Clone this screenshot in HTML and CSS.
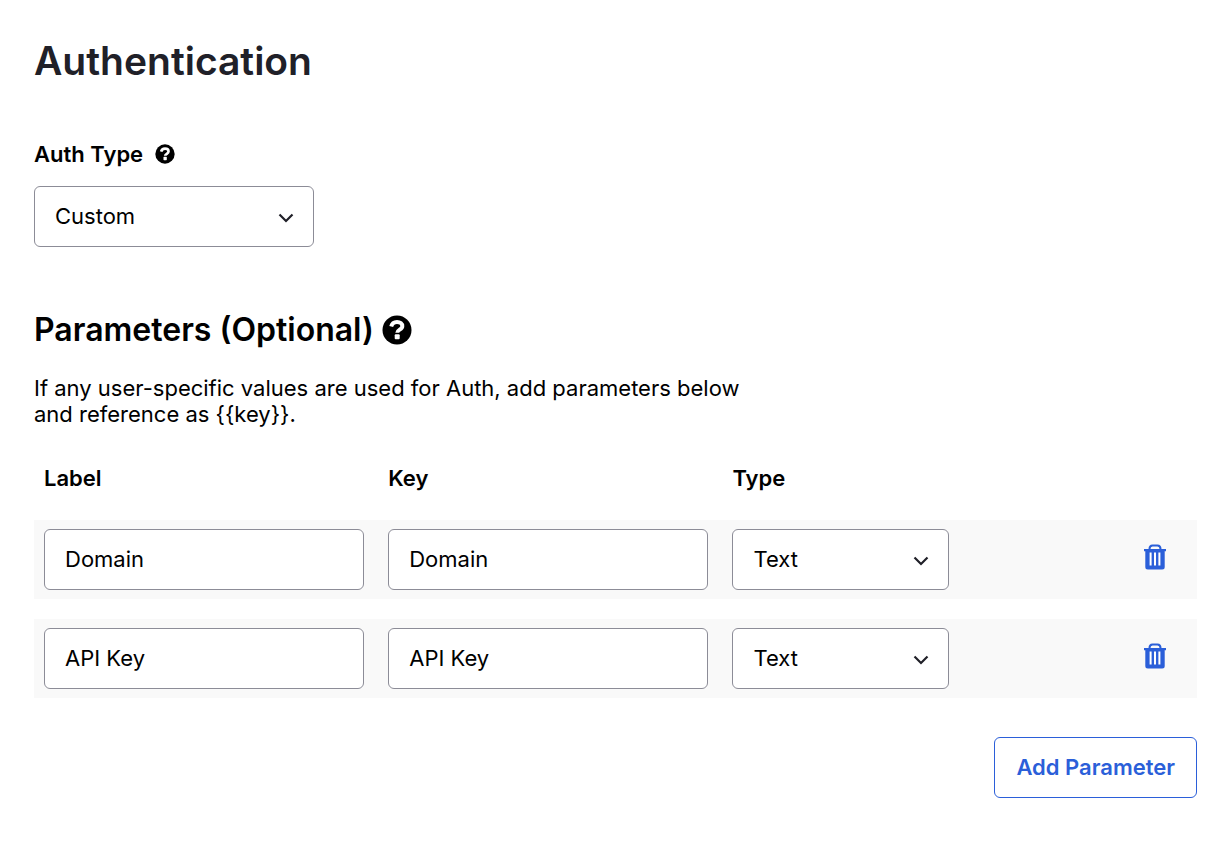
FILE: index.html
```html
<!DOCTYPE html>
<html lang="en">
<head>
<meta charset="utf-8">
<meta name="viewport" content="width=device-width, initial-scale=1">
<title>Authentication</title>
<link rel="stylesheet" href="styles.css">
</head>
<body>
<svg class="sprite" aria-hidden="true">
  <symbol id="help" viewBox="0 0 30 30">
    <circle cx="15" cy="15" r="14.500" fill="currentColor"/>
    <path d="M9.200 11.500C10 8.300 12.200 7 15 7c3.200 0 5.300 1.700 5.300 4.200 0 3.600-5 3.300-5 6.600" fill="none" stroke="#fff" stroke-width="4"/>
    <rect x="12.700" y="19.300" width="5" height="5" rx="1" fill="#fff"/>
  </symbol>
  <symbol id="chevron" viewBox="0 0 16 10">
    <path d="M1.500 1.500 8 8l6.500-6.500" fill="none" stroke="currentColor" stroke-width="2.200"/>
  </symbol>
  <symbol id="trash" viewBox="0 0 24 26">
    <path d="M6.500 6V5q0-3.500 3-3.500h5q3 0 3 3.500v1" fill="none" stroke="currentColor" stroke-width="2"/>
    <path d="M1 5h22v2.200h-1.300V23q0 2.500-2.500 2.500H4.800Q2.300 25.500 2.300 23V7.200H1z" fill="currentColor"/>
    <path d="M7.600 8.500v13M12 8.500v13M16.400 8.500v13" stroke="#fff" stroke-width="2"/>
  </symbol>
</svg>
<main class="page">
  <h1 class="page-title">Authentication</h1>

  <div class="field-head">
    <label class="field-label" for="auth-type">Auth Type</label>
    <svg class="help-small" role="img" aria-label="Help"><use href="#help"/></svg>
  </div>
  <div class="select auth-select">
    <select class="control" id="auth-type"><option>Custom</option></select>
    <svg class="chevron" aria-hidden="true"><use href="#chevron"/></svg>
  </div>

  <h2 class="section-title">Parameters (Optional)
    <svg class="help-large" role="img" aria-label="Help"><use href="#help"/></svg>
  </h2>
  <p class="description">If any user-specific values are used for Auth, add parameters below and reference as {{key}}.</p>

  <table class="params">
    <thead>
      <tr>
        <th class="col-text" scope="col">Label</th>
        <th class="col-text" scope="col">Key</th>
        <th class="col-type" scope="col">Type</th>
        <td class="col-action"></td>
      </tr>
    </thead>
    <tbody>
      <tr>
        <td><input class="control" type="text" value="Domain" aria-label="Label"></td>
        <td><input class="control" type="text" value="Domain" aria-label="Key"></td>
        <td><div class="select"><select class="control" aria-label="Type"><option>Text</option></select><svg class="chevron" aria-hidden="true"><use href="#chevron"/></svg></div></td>
        <td class="col-action"><button class="delete" type="button" aria-label="Delete Domain"><svg class="trash" aria-hidden="true"><use href="#trash"/></svg></button></td>
      </tr>
      <tr>
        <td><input class="control" type="text" value="API Key" aria-label="Label"></td>
        <td><input class="control" type="text" value="API Key" aria-label="Key"></td>
        <td><div class="select"><select class="control" aria-label="Type"><option>Text</option></select><svg class="chevron" aria-hidden="true"><use href="#chevron"/></svg></div></td>
        <td class="col-action"><button class="delete" type="button" aria-label="Delete API Key"><svg class="trash" aria-hidden="true"><use href="#trash"/></svg></button></td>
      </tr>
    </tbody>
  </table>
  <div class="actions"><button class="add" type="button">Add Parameter</button></div>
</main>
</body>
</html>
```
FILE: styles.css
```css
* { box-sizing: border-box; }
body {
  margin: 0;
  background: #fff;
  color: #000;
  font: 400 22px/26px Inter, "Liberation Sans", sans-serif;
}
.sprite { position: absolute; width: 0; height: 0; }
.page { padding: 35px 33px 54px 34px; }
.page-title {
  margin: 0 0 54px;
  color: #202028;
  font-size: 39px;
  font-weight: 600;
  line-height: 52px;
}
.field-head { display: flex; align-items: center; gap: 12px; margin-bottom: 19px; }
.field-label { font-weight: 600; }
.help-small { width: 20px; height: 20px; }
.select { position: relative; }
.auth-select { width: 280px; }
.control {
  display: block;
  width: 100%;
  height: 61px;
  padding: 0 20px 2px;
  border: 1px solid #8c8c97;
  border-radius: 6px;
  background: #fff;
  color: #000;
  font: inherit;
  appearance: none;
}
.chevron {
  position: absolute;
  right: 20px;
  top: 27px;
  width: 16px;
  height: 10px;
  color: #202028;
  pointer-events: none;
}
.section-title {
  display: flex;
  align-items: center;
  gap: 8px;
  margin: 63px 0 25px;
  font-size: 32px;
  font-weight: 600;
  line-height: 40px;
}
.help-large { width: 30px; height: 30px; }
.description { max-width: 720px; margin: 0; }
.params {
  width: 100%;
  margin: 18px 0 19px;
  table-layout: fixed;
  border-collapse: separate;
  border-spacing: 0 20px;
}
.params th, .params td { padding: 9px 14px 9px 10px; }
.params thead th, .params thead td { padding-block: 0 9px; }
.params th { font-weight: 600; text-align: left; }
.params tbody tr { background: #f9f9f9; }
.col-text { width: 29.6%; }
.col-type { width: 20.7%; }
.params .col-action { padding-right: 30px; text-align: right; }
.delete { padding: 0; border: 0; background: none; color: #2b5fd9; cursor: pointer; }
.trash { display: block; width: 24px; height: 26px; }
.actions { display: flex; justify-content: flex-end; }
.add {
  height: 61px;
  padding: 0 21px 2px;
  border: 1px solid #2b5fd9;
  border-radius: 6px;
  background: #fff;
  color: #2b5fd9;
  font: inherit;
  font-weight: 600;
  cursor: pointer;
}
```
